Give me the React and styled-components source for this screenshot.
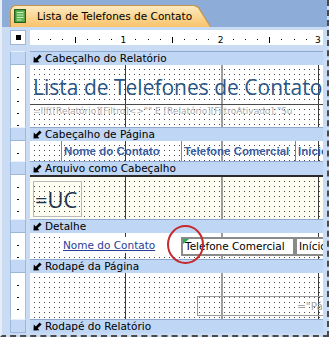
import React from "react";
import styled, { createGlobalStyle } from "styled-components";

const GlobalStyle = createGlobalStyle`
  html, body {
    margin: 0;
    padding: 0;
    background: #fff;
  }
  body {
    font-family: "DejaVu Sans", sans-serif;
  }
`;

const Window = styled.div`
  position: relative;
  width: 329px;
  height: 337px;
  box-sizing: border-box;
  overflow: hidden;
  display: flex;
  flex-direction: column;
  background: #cadcf4;
  border-left: 2px solid #e6edf7;
  border-right: 2px dashed #4a4a4a;
  border-bottom: 2px dashed #4a4a4a;
`;

const TabBar = styled.div`
  height: 27px;
  flex: none;
  box-sizing: border-box;
  padding: 5px 0 0 8px;
  display: flex;
  align-items: flex-end;
  background: #8dacd8;
`;

const Tab = styled.div`
  position: relative;
  width: 201px;
  height: 22px;
  box-sizing: border-box;
  padding-left: 4px;
  display: flex;
  align-items: center;
  gap: 11px;
  background: #c8944a;
  clip-path: polygon(0 5px, 2px 1px, 5px 0, 185px 0, 189px 2px, 201px 22px, 0 22px);
  font-size: 10.5px;
  color: #000;

  &::before {
    content: "";
    position: absolute;
    inset: 1px 1px 0 1px;
    background: linear-gradient(#fdeac0, #fbd48f 55%, #f8c36c);
    clip-path: polygon(0 4px, 2px 1px, 4px 0, 183px 0, 187px 2px, 199px 21px, 0 21px);
  }

  > * {
    position: relative;
  }
`;

const Workspace = styled.div`
  flex: 1;
  display: grid;
  grid-template-columns: 16px 293px;
  column-gap: 4px;
  align-content: start;
  padding: 3px 0 0 8px;
`;

const RulerCorner = styled.div`
  height: 15px;
  box-sizing: border-box;
  margin-bottom: 6px;
  display: flex;
  align-items: center;
  justify-content: center;
  background: #fff;
  border: 1px solid #9fb6d8;

  &::after {
    content: "";
    width: 5px;
    height: 5px;
    background: #000;
  }
`;

const RulerSvg = styled.svg`
  display: block;
  background: #fff;
  margin-bottom: 6px;
`;

const RulerNum = styled.text`
  font-family: "DejaVu Sans", sans-serif;
  font-size: 9px;
  text-anchor: middle;
  fill: #000;
`;

const VHead = styled.div`
  height: 14px;
  box-sizing: border-box;
  background: #c3d8f4;
  border: 1px solid #9db7dc;
  border-top-color: #e6effb;
`;

const VBody = styled.div`
  height: ${p => p.$h}px;
  box-sizing: border-box;
  border-left: 1px solid #a7bfdf;
  border-right: 1px solid #a7bfdf;
  background:
    repeating-linear-gradient(to bottom, transparent 0 11px, #111 11px 12px) 6px 1px / 2px 100% no-repeat,
    #fff;
`;

const Bar = styled.div`
  height: 14px;
  box-sizing: border-box;
  padding-left: 3px;
  display: flex;
  align-items: center;
  gap: 3px;
  background: #bfd6f5;
  border-top: 1px solid #8ea9cf;
  font-size: 10.5px;
  line-height: 13px;
  color: #000;
  white-space: nowrap;
`;

const Body = styled.div`
  position: relative;
  height: ${p => p.$h}px;
  box-sizing: border-box;
  overflow: hidden;
  border-top: ${p => (p.$topLine ? "2px solid #2b2b2b" : "none")};
  background-color: #4a4a4a;
  background-image:
    linear-gradient(to right, #3a3a3a 0 1px, transparent 1px),
    linear-gradient(to right, ${p => p.$tint || "#fff"} 0 4px, transparent 4px),
    linear-gradient(to bottom, ${p => p.$tint || "#fff"} 0 4px, transparent 4px);
  background-size: 96.5px 100%, 5px 5px, 5px 5px;
  background-position: 95px 0, 0 0, 0 0;
`;

const TitleLabel = styled.div`
  margin-top: 7px;
  height: 33px;
  box-sizing: border-box;
  padding-left: 3px;
  border-bottom: 1px solid #4a4a4a;
  font-family: "Open Sans", sans-serif;
  font-size: 21px;
  line-height: 31px;
  color: #2b5686;
  white-space: nowrap;
`;

const FormulaLine = styled.div`
  height: 13px;
  padding-left: 3px;
  font-size: 9px;
  line-height: 13px;
  color: #a9a9a9;
  white-space: nowrap;
`;

const ControlRow = styled.div`
  display: flex;
  align-items: flex-start;
  height: 100%;
  box-sizing: border-box;
  padding: ${p => p.$top || 0}px 0 0 ${p => p.$left}px;
`;

const HeaderLabel = styled.div`
  width: ${p => (p.$w ? `${p.$w}px` : "auto")};
  flex: ${p => (p.$w ? "none" : 1)};
  height: 100%;
  box-sizing: border-box;
  padding-left: 2px;
  border-left: 1px solid #6f86aa;
  font-family: "Liberation Sans", sans-serif;
  font-weight: bold;
  font-size: 11.5px;
  line-height: 20px;
  color: #3a5ca0;
  white-space: nowrap;
  overflow: hidden;
`;

const ExprBox = styled.div`
  margin: 4px 0 0 3px;
  width: 49px;
  height: 36px;
  box-sizing: border-box;
  padding-left: 1px;
  border: 1px solid #b8b8b8;
  font-family: "Open Sans", sans-serif;
  font-size: 22px;
  line-height: 34px;
  color: #1e3350;
`;

const BoundField = styled.div`
  width: 120px;
  height: 16px;
  box-sizing: border-box;
  padding-left: 2px;
  background: #fff;
  font-size: 10.5px;
  line-height: 16px;
  color: #2a3d96;
  text-decoration: underline;
  white-space: nowrap;
`;

const TextBox = styled.div`
  position: relative;
  width: ${p => (p.$w ? `${p.$w}px` : "auto")};
  flex: ${p => (p.$w ? "none" : 1)};
  height: 19px;
  box-sizing: border-box;
  padding-left: 2px;
  background: #fff;
  border: 2px solid #8a8a8a;
  border-right: ${p => (p.$w ? "2px solid #8a8a8a" : "none")};
  font-size: 10.5px;
  line-height: 15px;
  color: #000;
  white-space: nowrap;
  overflow: hidden;
`;

const ErrorFlag = styled.span`
  position: absolute;
  top: 0;
  left: 0;
  width: 0;
  height: 0;
  border-top: 5px solid #22b14c;
  border-right: 6px solid transparent;
`;

const FooterBox = styled.div`
  flex: 1;
  height: 20px;
  box-sizing: border-box;
  padding-left: 99px;
  border: 1px solid #9a9a9a;
  border-right: none;
  font-size: 10.5px;
  line-height: 18px;
  color: #a3a3a3;
  white-space: nowrap;
  overflow: hidden;
`;

const Highlight = styled.div`
  position: absolute;
  left: 165px;
  top: 225px;
  width: 37px;
  height: 39px;
  box-sizing: border-box;
  border: 2px solid #c42a2e;
  border-radius: 50%;
  pointer-events: none;
`;

const ReportIcon = () => (
  <svg width="12" height="14" viewBox="0 0 12 14">
    <rect x="0.5" y="0.5" width="11" height="13" fill="#3f8f35" stroke="#24601f" />
    <rect x="2" y="1.5" width="8.5" height="11" fill="#5fb24f" />
    <rect x="3" y="3" width="6.5" height="1" fill="#c9ecbd" />
    <rect x="3" y="5.5" width="6.5" height="1" fill="#c9ecbd" />
    <rect x="3" y="8" width="6.5" height="1" fill="#c9ecbd" />
    <rect x="3" y="10.5" width="4.5" height="1" fill="#c9ecbd" />
  </svg>
);

const SectionIcon = () => (
  <svg width="9" height="9" viewBox="0 0 9 9">
    <path d="M0.5 8.5 L0.8 2.6 L2.8 4.4 L6.6 0.6 L8.6 2.6 L4.7 6.3 L6.4 8.3 Z" fill="#000" />
  </svg>
);

const TopRuler = () => {
  const inch = 97.3;
  const origin = -4;
  const marks = [];
  for (let i = 1; i < 30; i++) {
    const x = origin + (i * inch) / 8;
    if (x > 292) break;
    if (i % 8 === 0) {
      marks.push(
        <RulerNum key={i} x={x} y={13}>
          {i / 8}
        </RulerNum>
      );
    } else if (i % 4 === 0) {
      marks.push(<rect key={i} x={Math.round(x)} y={7} width={1} height={6} fill="#000" />);
    } else {
      marks.push(<rect key={i} x={Math.round(x)} y={9} width={1} height={1} fill="#000" />);
    }
  }
  return (
    <RulerSvg width="293" height="15">
      {marks}
    </RulerSvg>
  );
};

const sections = [
  {
    title: "Cabeçalho do Relatório",
    h: 62,
    content: (
      <>
        <TitleLabel>Lista de Telefones de Contato</TitleLabel>
        <FormulaLine>=IIf([Relatório][Filtro]&lt;&gt;"" E [Relatório][FiltroAtivado];"Su</FormulaLine>
      </>
    )
  },
  {
    title: "Cabeçalho de Página",
    h: 20,
    content: (
      <ControlRow $left={31}>
        <HeaderLabel $w={120}>Nome do Contato</HeaderLabel>
        <HeaderLabel $w={114}>Telefone Comercial</HeaderLabel>
        <HeaderLabel>Início</HeaderLabel>
      </ControlRow>
    )
  },
  {
    title: "Arquivo como Cabeçalho",
    h: 44,
    tint: "#fffef3",
    topLine: true,
    content: <ExprBox>=UC</ExprBox>
  },
  {
    title: "Detalhe",
    h: 26,
    content: (
      <ControlRow $left={31} $top={4}>
        <BoundField>Nome do Contato</BoundField>
        <TextBox $w={114}>
          <ErrorFlag />
          Telefone Comercial
        </TextBox>
        <TextBox>Início</TextBox>
      </ControlRow>
    )
  },
  {
    title: "Rodapé da Página",
    h: 46,
    content: (
      <ControlRow $left={167} $top={23}>
        <FooterBox>="Página " &amp; [Página] &amp; " de " &amp; [Páginas]</FooterBox>
      </ControlRow>
    )
  }
];

export default function App() {
  return (
    <>
      <GlobalStyle />
      <Window>
        <TabBar>
          <Tab>
            <ReportIcon />
            <span>Lista de Telefones de Contato</span>
          </Tab>
        </TabBar>
        <Workspace>
          <RulerCorner />
          <TopRuler />
          {sections.map(s => (
            <React.Fragment key={s.title}>
              <VHead />
              <Bar>
                <SectionIcon />
                {s.title}
              </Bar>
              <VBody $h={s.h} />
              <Body $h={s.h} $tint={s.tint} $topLine={s.topLine}>
                {s.content}
              </Body>
            </React.Fragment>
          ))}
          <VHead />
          <Bar>
            <SectionIcon />
            Rodapé do Relatório
          </Bar>
        </Workspace>
        <Highlight />
      </Window>
    </>
  );
}
